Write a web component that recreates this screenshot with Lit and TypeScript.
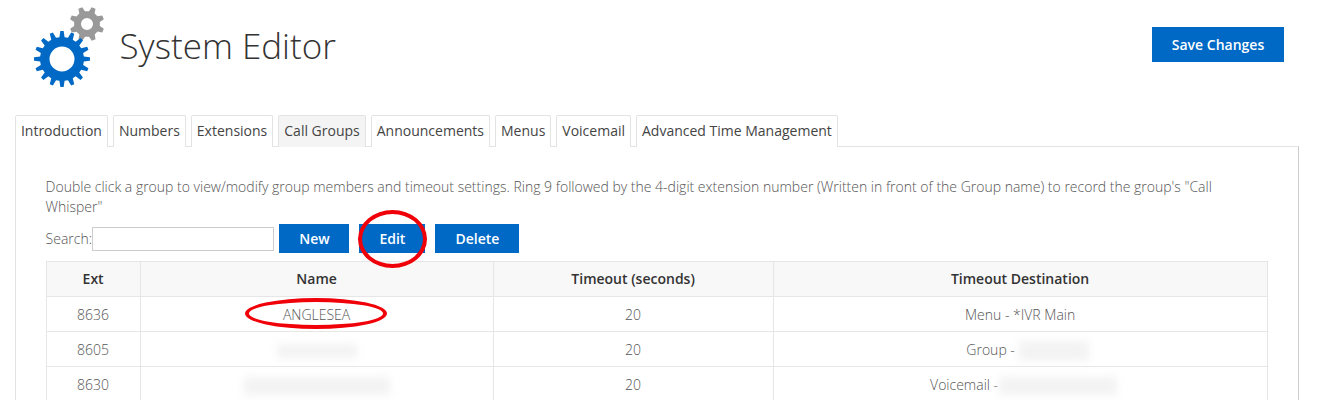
import { LitElement, html, css, svg } from "lit";
import { customElement } from "lit/decorators.js";

function gear(cx: number, cy: number, ro: number, ri: number, hole: number, teeth: number, rot = 0) {
  const pts: string[] = [];
  const step = (Math.PI * 2) / teeth;
  for (let i = 0; i < teeth; i++) {
    const a = rot + i * step;
    const p = (r: number, f: number) => {
      const t = a + f * step;
      return `${(cx + r * Math.cos(t)).toFixed(2)} ${(cy + r * Math.sin(t)).toFixed(2)}`;
    };
    pts.push(p(ri, -0.3), p(ro, -0.15), p(ro, 0.15), p(ri, 0.3));
  }
  return `M${pts.join("L")}Z M${cx - hole} ${cy}a${hole} ${hole} 0 1 0 ${hole * 2} 0a${hole} ${hole} 0 1 0 ${-hole * 2} 0Z`;
}

const tabs = ["Introduction", "Numbers", "Extensions", "Call Groups", "Announcements", "Menus", "Voicemail", "Advanced Time Management"];

@customElement("app-root")
export class AppRoot extends LitElement {
  static styles = css`
    :host { display: block; height: 400px; overflow: hidden; position: relative; background: #fff; font-family: "Open Sans", sans-serif; font-size: 14px; color: #555; }
    .header { display: flex; align-items: flex-start; height: 115px; padding-right: 37px; }
    .logo { display: block; width: 120px; height: 95px; flex: none; }
    .title { flex: 1; margin: 21px 0 0 -0.5px; font-size: 35px; line-height: 50px; font-weight: 300; color: #333; }
    .btn { border: 0; border-radius: 0; background: #0069c6; color: #fff; font: 600 14px "Open Sans", sans-serif; padding: 0; height: 29px; }
    .save { width: 132px; height: 35px; margin-top: 27px; }
    .tabs { display: flex; gap: 5px; margin-left: 14.9px; height: 31px; }
    .tab { box-sizing: border-box; height: 32px; padding: 0 5px; border: 1px solid #e3e3e3; border-bottom: 0; border-radius: 2px 2px 0 0; color: #444; line-height: 30px; white-space: nowrap; background: #fff; position: relative; z-index: 1; }
    .tab.active { background: #f4f4f4; }
    .panel { box-sizing: border-box; margin: 0 22px 0 14.6px; height: 300px; padding: 30px 30px 0; border-top: 1px solid #e3e3e3; border-left: 1px solid #e3e3e3; border-right: 1px solid #ccc; }
    .intro { margin: 0; line-height: 20px; height: 40px; color: #555; font-weight: 300; }
    .tools { display: flex; align-items: center; margin-top: 7px; height: 29px; font-weight: 300; }
    .search { box-sizing: border-box; width: 182px; height: 24px; margin: 0 5.4px 0 0; border: 1px solid #ccc; background: #fff; padding: 0; }
    .new { width: 70px; margin-right: 10px; }
    .edit { width: 66px; margin-right: 10px; }
    .delete { width: 84px; }
    table { border-collapse: collapse; table-layout: fixed; width: 1221px; margin-top: 8px; }
    th, td { border: 1px solid #e6e6e6; height: 34px; padding: 0; text-align: center; }
    th { background: #f8f8f8; color: #333; font-weight: 600; height: 33px; padding-bottom: 1px; }
    td { font-weight: 300; color: #555; }
    .blur { display: inline-block; vertical-align: middle; background: #f3f3f3; filter: blur(4px); }
    .b1 { width: 80px; height: 14px; margin: -10px 0; }
    .b2 { width: 146px; height: 18px; margin: -10px 0; }
    .b3 { width: 70px; height: 20px; margin: -10px -15px -10px 4px; }
    .b4 { width: 118px; height: 18px; margin: -10px -7px -10px 1px; }
    .mark { position: absolute; border: 4px solid #f00008; border-radius: 50%; box-sizing: border-box; }
    .m1 { left: 358px; top: 210px; width: 69px; height: 58px; }
    .m2 { left: 245px; top: 298px; width: 142px; height: 31px; }
  `;

  render() {
    return html`
      <div class="header">
        <svg class="logo" viewBox="0 0 120 95" aria-hidden="true">
          ${svg`<path fill="#999" fill-rule="evenodd" d=${gear(87, 24, 17.5, 13, 6, 8, 0.39)} />`}
          ${svg`<path fill="#0069c6" fill-rule="evenodd" d=${gear(62, 59, 28, 22, 12.5, 16, 0)} />`}
        </svg>
        <h1 class="title">System Editor</h1>
        <button class="btn save">Save Changes</button>
      </div>
      <div class="tabs">
        ${tabs.map((t) => html`<div class="tab ${t === "Call Groups" ? "active" : ""}">${t}</div>`)}
      </div>
      <div class="panel">
        <p class="intro">Double click a group to view/modify group members and timeout settings. Ring 9 followed by the 4-digit extension number (Written in front of the Group name) to record the group's "Call Whisper"</p>
        <div class="tools">
          <span>Search:</span><input class="search" />
          <button class="btn new">New</button>
          <button class="btn edit">Edit</button>
          <button class="btn delete">Delete</button>
        </div>
        <table>
          <colgroup><col style="width:94px" /><col style="width:353px" /><col style="width:280px" /><col style="width:494px" /></colgroup>
          <thead><tr><th>Ext</th><th>Name</th><th>Timeout (seconds)</th><th>Timeout Destination</th></tr></thead>
          <tbody>
            <tr><td>8636</td><td>ANGLESEA</td><td>20</td><td>Menu - *IVR Main</td></tr>
            <tr><td>8605</td><td><span class="blur b1"></span></td><td>20</td><td>Group -<span class="blur b3"></span></td></tr>
            <tr><td>8630</td><td><span class="blur b2"></span></td><td>20</td><td>Voicemail -<span class="blur b4"></span></td></tr>
          </tbody>
        </table>
      </div>
      <div class="mark m1"></div>
      <div class="mark m2"></div>
    `;
  }
}
